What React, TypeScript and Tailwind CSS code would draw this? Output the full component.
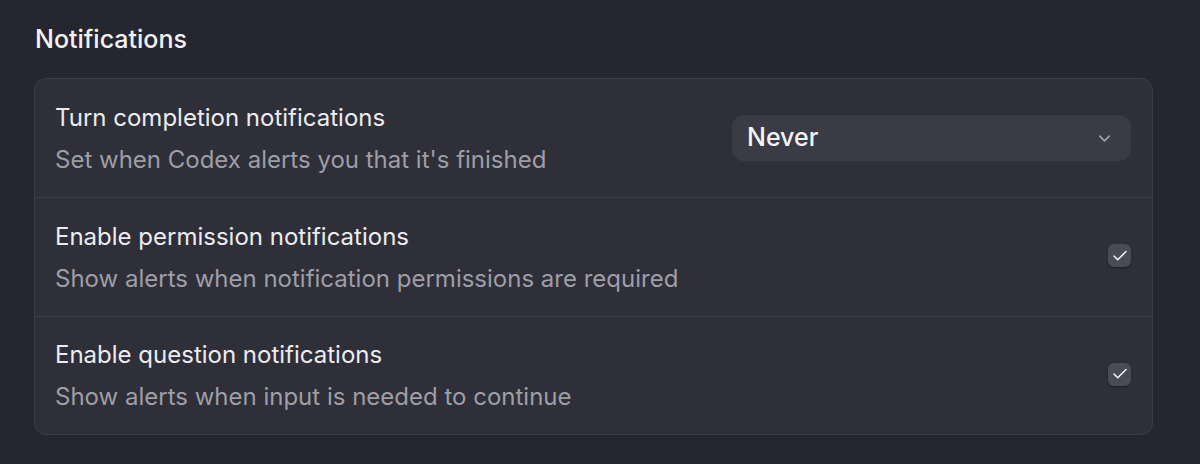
import { ChevronDown, Check } from 'lucide-react';

const rows = [
  {
    title: 'Enable permission notifications',
    desc: 'Show alerts when notification permissions are required',
  },
  {
    title: 'Enable question notifications',
    desc: 'Show alerts when input is needed to continue',
  },
];

export default function App() {
  return (
    <div
      className="h-[464px] w-[1200px] bg-[#262630] pl-[34px] pr-[47px] pt-[24px]"
      style={{ fontFamily: 'Inter, "Noto Sans", sans-serif' }}
    >
      <h2 className="pl-[1px] text-[25px] font-medium leading-[30px] text-[#f2f2f4]">Notifications</h2>

      <div className="mt-[24px] rounded-[12px] border border-[#3c3c46] bg-[#2f2f39]">
        {/* Completion notifications */}
        <div className="flex h-[119px] items-center justify-between border-b border-[#3c3c46] pl-[20px] pr-[21px]">
          <div className="flex flex-col gap-[14px] pt-[1px]">
            <div className="text-[24px] leading-[28px] text-[#ececef]">Turn completion notifications</div>
            <div className="text-[24px] leading-[28px] text-[#9e9ea6]">Set when Codex alerts you that it's finished</div>
          </div>
          <button className="flex h-[46px] w-[399px] items-center justify-between rounded-[12px] bg-[#3b3b45] pl-[15px] pr-[17px]">
            <span className="text-[25px] font-medium text-[#f4f4f6]">Never</span>
            <ChevronDown size={19} strokeWidth={2} className="text-[#a4a4ac]" />
          </button>
        </div>

        {rows.map((row, i) => (
          <div
            key={row.title}
            className={
              'flex items-center justify-between pl-[20px] pr-[21px] ' +
              (i === 0 ? 'h-[119px] border-b border-[#3c3c46]' : 'h-[117px]')
            }
          >
            <div className="flex flex-col gap-[14px] pt-[1px]">
              <div className="text-[24px] leading-[28px] text-[#ececef]">{row.title}</div>
              <div className="text-[24px] leading-[28px] text-[#9e9ea6]">{row.desc}</div>
            </div>
            <div className="mb-[3px] flex h-[23px] w-[23px] items-center justify-center rounded-[6px] bg-[#4b4b55] shadow-[0_1px_2px_rgba(0,0,0,0.4)]">
              <Check size={18} strokeWidth={2} className="text-[#f4f4f6]" />
            </div>
          </div>
        ))}
      </div>
    </div>
  );
}
